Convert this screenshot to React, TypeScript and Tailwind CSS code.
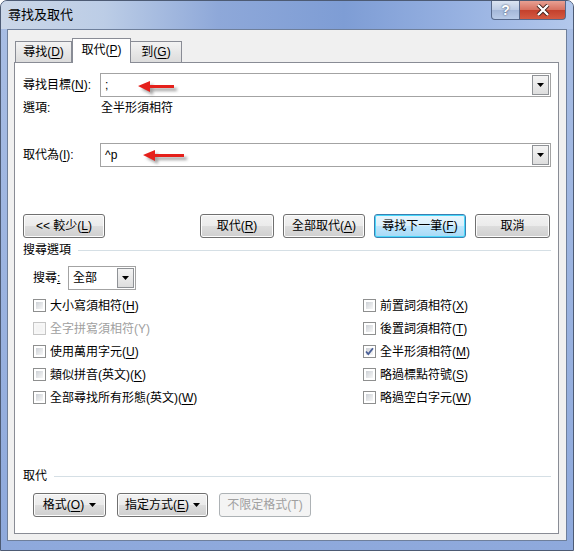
import React from "react";

const font = "font-['Liberation_Sans','Noto_Sans_CJK_TC',sans-serif]";

function K({ k }: { k: string }) {
  return <u className="underline-offset-[2px]">{k}</u>;
}

function DropArrow({ w, h }: { w: string; h: string }) {
  return (
    <span
      className={`${w} ${h} flex items-center justify-center border border-[#8f9296] bg-[linear-gradient(#f4f4f4,#dedede)]`}
    >
      <svg width="7" height="4" viewBox="0 0 7 4">
        <path d="M0 0h7L3.5 4z" fill="#000" />
      </svg>
    </span>
  );
}

function Btn({
  children,
  w,
  primary,
  disabled,
}: {
  children: React.ReactNode;
  w: string;
  primary?: boolean;
  disabled?: boolean;
}) {
  let tone =
    "border-[#707070] bg-[linear-gradient(#f2f2f2_0%,#ebebeb_50%,#dddddd_51%,#cfcfcf_100%)] text-black shadow-[inset_0_0_0_1px_#fcfcfc]";
  if (primary)
    tone =
      "border-[#3c7fb1] bg-[linear-gradient(#eaf6fd_0%,#d9f0fc_50%,#bee6fd_51%,#a7d9f5_100%)] text-black shadow-[inset_0_0_0_1px_#48d8fb]";
  if (disabled) tone = "border-[#adb2b5] bg-[#f4f4f4] text-[#a0a0a0]";
  return (
    <div
      className={`${w} ${tone} flex h-[24px] items-center justify-center rounded-[3px] border text-[12px]`}
    >
      {children}
    </div>
  );
}

function Check({
  label,
  checked,
  disabled,
}: {
  label: React.ReactNode;
  checked?: boolean;
  disabled?: boolean;
}) {
  return (
    <div className="flex h-[23px] items-center gap-[4px]">
      <span
        className={`flex h-[13px] w-[13px] items-center justify-center border p-[2px] ${
          disabled ? "border-[#c6c6c6] bg-[#f7f7f7]" : "border-[#8e8f8f] bg-white"
        }`}
      >
        <span
          className={`relative flex h-full w-full items-center justify-center ${
            disabled
              ? "bg-[#f4f4f4]"
              : "bg-[linear-gradient(135deg,#cdd1d6,#f7f7f7)]"
          }`}
        >
          {checked && (
            <svg width="9" height="9" viewBox="0 0 9 9" className="absolute">
              <path
                d="M1 4.5l2.3 2.6L8 1.2"
                fill="none"
                stroke="#4a5f97"
                strokeWidth="1.8"
              />
            </svg>
          )}
        </span>
      </span>
      <span className={disabled ? "text-[#a0a0a0]" : "text-black"}>{label}</span>
    </div>
  );
}

function Arrow({ left, top, len }: { left: string; top: string; len: number }) {
  return (
    <svg
      width={len + 8}
      height="20"
      viewBox={`0 0 ${len + 8} 20`}
      className={`absolute ${left} ${top}`}
    >
      <defs>
        <filter id={`b${len}`} x="-20%" y="-50%" width="140%" height="200%">
          <feGaussianBlur stdDeviation="1.6" />
        </filter>
      </defs>
      <g filter={`url(#b${len})`} opacity="0.55" transform="translate(3 3)">
        <path d={`M0 6L12 1v4h${len - 12}v3H12v4z`} fill="#555" />
      </g>
      <path d={`M0 6L12 1v4h${len - 12}v3H12v4z`} fill="#e5201b" />
    </svg>
  );
}

export default function App() {
  return (
    <div
      className={`${font} relative h-[551px] w-[574px] overflow-hidden rounded-t-[7px] border border-[#4d5b74] bg-[linear-gradient(180deg,#a9bee4,#8ea9dc)] text-[12px] text-black`}
    >
      {/* title bar */}
      <div className="flex h-[28px] bg-[linear-gradient(90deg,#cbd7e8_0%,#bccde6_18%,#8ea8d9_38%,#7e9dd5_60%,#94afe0_78%,#b3c8ec_100%)]">
        <div className="flex items-center pl-[7px] text-[13px] text-black">尋找及取代</div>
        <div className="ml-auto mr-[7px] flex h-[19px]">
          <div className="flex w-[29px] items-center justify-center rounded-bl-[4px] border border-t-0 border-[#56688a] bg-[linear-gradient(#dbe4f2_0%,#bccbe4_50%,#a4b7d8_51%,#b9cbe8_100%)] text-[14px] font-bold text-white [text-shadow:0_0_2px_#2b3a55]">
            ?
          </div>
          <div className="flex w-[46px] items-center justify-center rounded-br-[4px] border border-l-0 border-t-0 border-[#56688a] bg-[linear-gradient(#e8a093_0%,#d6705f_50%,#c4402c_51%,#d45a42_100%)]">
            <svg width="14" height="12" viewBox="0 0 14 12">
              <path d="M2 1l10 10M12 1L2 11" stroke="#3b1b16" strokeWidth="4" />
              <path d="M2 1l10 10M12 1L2 11" stroke="#fff" strokeWidth="2.4" />
            </svg>
          </div>
        </div>
      </div>

      {/* client area */}
      <div className="ml-[6px] h-[512px] w-[560px] border border-[#6e7f9b] bg-[#f0f0f0] pl-[6px] pt-[8px]">
        {/* tabs */}
        <div className="flex h-[24px] items-end pl-[1px]">
          <div className="flex h-[21px] w-[57px] items-center justify-center border border-b-0 border-[#898c95] bg-[linear-gradient(#f3f3f3,#dcdcdc)]">
            尋找(<K k="D" />)
          </div>
          <div className="relative z-10 -mb-px flex h-[25px] w-[59px] items-center justify-center border border-b-0 border-[#898c95] bg-white pb-[2px]">
            取代(<K k="P" />)
          </div>
          <div className="flex h-[21px] w-[51px] items-center justify-center border border-b-0 border-l-0 border-[#898c95] bg-[linear-gradient(#f3f3f3,#dcdcdc)]">
            到(<K k="G" />)
          </div>
        </div>

        {/* panel */}
        <div className="h-[472px] w-[545px] border border-[#898c95] bg-white pl-[8px]">
          <div className="mt-[10px] flex items-center">
            <span className="w-[77px]">
              尋找目標(<K k="N" />):
            </span>
            <div className="flex h-[24px] w-[451px] items-center justify-between border border-[#a3a3a3] bg-white pl-[4px] pr-px">
              <span>;</span>
              <DropArrow w="w-[17px]" h="h-[20px]" />
            </div>
          </div>

          <div className="flex h-[21px] items-center">
            <span className="w-[78px]">選項:</span>
            <span>全半形須相符</span>
          </div>

          <div className="mt-[25px] flex items-center">
            <span className="w-[77px]">
              取代為(<K k="I" />):
            </span>
            <div className="flex h-[24px] w-[451px] items-center justify-between border border-[#a3a3a3] bg-white pl-[4px] pr-px">
              <span>^p</span>
              <DropArrow w="w-[17px]" h="h-[20px]" />
            </div>
          </div>

          <div className="mt-[47px] flex items-center">
            <Btn w="w-[82px]">
              &lt;&lt; 較少(<K k="L" />)
            </Btn>
            <div className="ml-[95px] flex gap-[9px]">
              <Btn w="w-[74px]">
                取代(<K k="R" />)
              </Btn>
              <Btn w="w-[82px]">
                全部取代(<K k="A" />)
              </Btn>
              <Btn w="w-[92px]" primary>
                尋找下一筆(<K k="F" />)
              </Btn>
              <Btn w="w-[75px]">取消</Btn>
            </div>
          </div>

          <div className="mt-[4px] flex h-[16px] items-center pr-[7px]">
            <span>搜尋選項</span>
            <span className="ml-[7px] h-px flex-1 bg-[#d5dfe5]" />
          </div>

          <div className="mt-[8px] flex items-center pl-[10px]">
            <span className="w-[35px]">
              搜尋<u>:</u>
            </span>
            <div className="flex h-[24px] w-[68px] items-center justify-between border border-[#a3a3a3] bg-white pl-[4px] pr-px">
              <span>全部</span>
              <DropArrow w="w-[17px]" h="h-[20px]" />
            </div>
          </div>

          <div className="mt-[4px] flex pl-[10px]">
            <div className="flex w-[330px] flex-col">
              <Check label={<>大小寫須相符(<K k="H" />)</>} />
              <Check label="全字拼寫須相符(Y)" disabled />
              <Check label={<>使用萬用字元(<K k="U" />)</>} />
              <Check label={<>類似拼音(英文)(<K k="K" />)</>} />
              <Check label={<>全部尋找所有形態(英文)(<K k="W" />)</>} />
            </div>
            <div className="flex flex-col">
              <Check label={<>前置詞須相符(<K k="X" />)</>} />
              <Check label={<>後置詞須相符(<K k="T" />)</>} />
              <Check label={<>全半形須相符(<K k="M" />)</>} checked />
              <Check label={<>略過標點符號(<K k="S" />)</>} />
              <Check label={<>略過空白字元(<K k="W" />)</>} />
            </div>
          </div>

          <div className="mt-[59px] flex h-[16px] items-center pr-[7px]">
            <span>取代</span>
            <span className="ml-[7px] h-px flex-1 bg-[#d5dfe5]" />
          </div>

          <div className="mt-[9px] flex gap-[11px] pl-[10px]">
            <Btn w="w-[73px]">
              格式(<K k="O" />)
              <svg width="7" height="4" viewBox="0 0 7 4" className="ml-[5px]">
                <path d="M0 0h7L3.5 4z" fill="#000" />
              </svg>
            </Btn>
            <Btn w="w-[91px]">
              指定方式(<K k="E" />)
              <svg width="7" height="4" viewBox="0 0 7 4" className="ml-[4px]">
                <path d="M0 0h7L3.5 4z" fill="#000" />
              </svg>
            </Btn>
            <Btn w="w-[92px]" disabled>
              不限定格式(T)
            </Btn>
          </div>
        </div>
      </div>

      {/* annotation arrows */}
      <Arrow left="left-[137px]" top="top-[79px]" len={36} />
      <Arrow left="left-[142px]" top="top-[148px]" len={41} />
    </div>
  );
}
